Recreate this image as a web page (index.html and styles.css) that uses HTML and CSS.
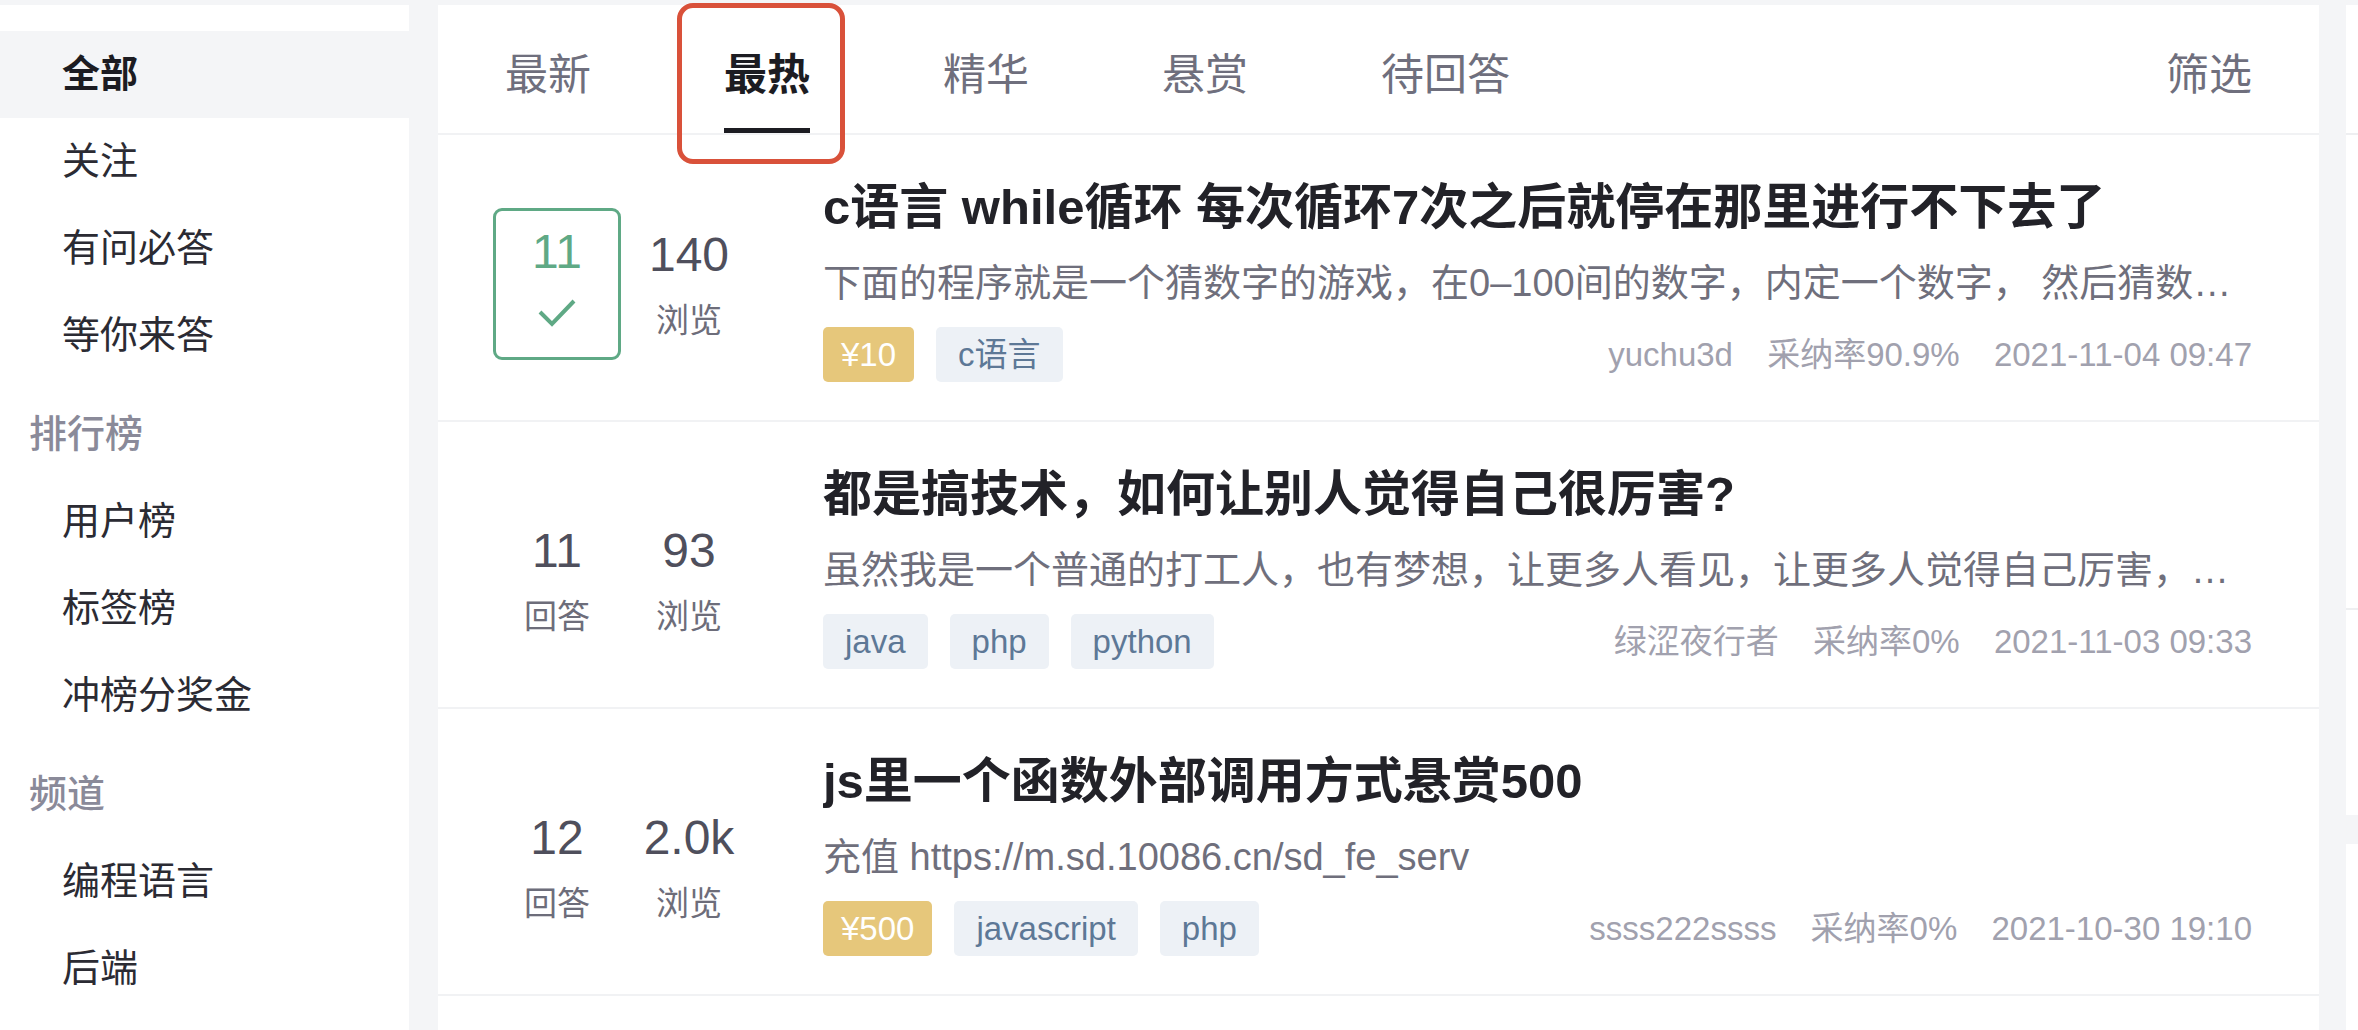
FILE: index.html
```html
<!DOCTYPE html>
<html lang="zh-CN">
<head>
    <meta charset="UTF-8">
    <meta name="viewport" content="width=device-width, initial-scale=1.0">
    <title>问答</title>
    <link rel="stylesheet" href="styles.css">
</head>
<body>
<div class="page">

    <!-- Left navigation -->
    <aside class="sidebar">
        <div class="nav-item active">全部</div>
        <div class="nav-item">关注</div>
        <div class="nav-item">有问必答</div>
        <div class="nav-item">等你来答</div>

        <div class="nav-title">排行榜</div>
        <div class="nav-item">用户榜</div>
        <div class="nav-item">标签榜</div>
        <div class="nav-item">冲榜分奖金</div>

        <div class="nav-title">频道</div>
        <div class="nav-item">编程语言</div>
        <div class="nav-item">后端</div>
    </aside>

    <!-- Question feed -->
    <main class="feed">
        <div class="tabs">
            <div class="tab">最新</div>
            <div class="tab active">最热<span class="highlight"></span></div>
            <div class="tab">精华</div>
            <div class="tab">悬赏</div>
            <div class="tab">待回答</div>
            <div class="tab filter">筛选</div>
        </div>

        <div class="question">
            <div class="stats solved">
                <div class="stat accepted">
                    <div class="stat-num">11</div>
                    <svg class="check" width="38" height="28" viewBox="0 0 38 28">
                        <path d="M2 13 L14 25 L36 2" fill="none" stroke="#5fa985" stroke-width="4"/>
                    </svg>
                </div>
                <div class="stat">
                    <div class="stat-num">140</div>
                    <div class="stat-label">浏览</div>
                </div>
            </div>
            <div class="body">
                <div class="title">c语言 while循环 每次循环7次之后就停在那里进行不下去了</div>
                <div class="desc">下面的程序就是一个猜数字的游戏，在0–100间的数字，内定一个数字， 然后猜数…</div>
                <div class="foot">
                    <div class="tags">
                        <span class="tag bounty">¥10</span>
                        <span class="tag">c语言</span>
                    </div>
                    <div class="meta">
                        <span>yuchu3d</span>
                        <span>采纳率90.9%</span>
                        <span>2021-11-04 09:47</span>
                    </div>
                </div>
            </div>
        </div>

        <div class="question">
            <div class="stats">
                <div class="stat">
                    <div class="stat-num">11</div>
                    <div class="stat-label">回答</div>
                </div>
                <div class="stat">
                    <div class="stat-num">93</div>
                    <div class="stat-label">浏览</div>
                </div>
            </div>
            <div class="body">
                <div class="title">都是搞技术，如何让别人觉得自己很厉害?</div>
                <div class="desc">虽然我是一个普通的打工人，也有梦想，让更多人看见，让更多人觉得自己厉害，…</div>
                <div class="foot">
                    <div class="tags">
                        <span class="tag">java</span>
                        <span class="tag">php</span>
                        <span class="tag">python</span>
                    </div>
                    <div class="meta">
                        <span>绿涩夜行者</span>
                        <span>采纳率0%</span>
                        <span>2021-11-03 09:33</span>
                    </div>
                </div>
            </div>
        </div>

        <div class="question">
            <div class="stats">
                <div class="stat">
                    <div class="stat-num">12</div>
                    <div class="stat-label">回答</div>
                </div>
                <div class="stat">
                    <div class="stat-num">2.0k</div>
                    <div class="stat-label">浏览</div>
                </div>
            </div>
            <div class="body">
                <div class="title">js里一个函数外部调用方式悬赏500</div>
                <div class="desc">充值 https://m.sd.10086.cn/sd_fe_serv</div>
                <div class="foot">
                    <div class="tags">
                        <span class="tag bounty">¥500</span>
                        <span class="tag">javascript</span>
                        <span class="tag">php</span>
                    </div>
                    <div class="meta">
                        <span>ssss222ssss</span>
                        <span>采纳率0%</span>
                        <span>2021-10-30 19:10</span>
                    </div>
                </div>
            </div>
        </div>
    </main>

    <!-- Right column (cut off by the window) -->
    <aside class="side-panel">
        <div class="side-card first">
            <div class="side-head"></div>
            <div class="side-block"></div>
        </div>
        <div class="side-card"></div>
    </aside>

</div>
</body>
</html>
```

FILE: styles.css
```css
body {
    margin: 0;
    background-color: #f4f5f7;
    font-family: "Liberation Sans", "Noto Sans CJK SC", sans-serif;
    overflow: hidden;
}
.page {
    display: flex;
    padding-top: 5px;
    height: 1025px;
}

/* Sidebar */
.sidebar {
    width: 409px;
    flex-shrink: 0;
    background-color: #fff;
    padding-top: 26px;
}
.nav-item {
    height: 87px;
    line-height: 87px;
    padding-left: 62px;
    font-size: 38px;
    color: #2b2b33;
}
.nav-item.active {
    background-color: #f4f5f7;
    color: #1c1c22;
    font-weight: 600;
}
.nav-title {
    margin-top: 12px;
    height: 87px;
    line-height: 87px;
    padding-left: 29px;
    font-size: 38px;
    font-weight: 500;
    color: #8a8a99;
}

/* Feed */
.feed {
    width: 1881px;
    flex-shrink: 0;
    margin-left: 29px;
    background-color: #fff;
}
.tabs {
    display: flex;
    gap: 133px;
    padding: 0 67px;
    border-bottom: 2px solid #f1f2f4;
}
.tab {
    position: relative;
    height: 128px;
    box-sizing: border-box;
    padding-top: 9px;
    border-bottom: 5px solid transparent;
    display: flex;
    align-items: center;
    font-size: 43px;
    color: #6f6f7d;
}
.tab.active {
    color: #1c1c22;
    font-weight: 600;
    border-bottom-color: #1c1c22;
}
.tab.filter {
    margin-left: auto;
}
.highlight {
    position: absolute;
    left: -47px;
    top: -2px;
    width: 168px;
    height: 161px;
    box-sizing: border-box;
    border: 5px solid #d9513a;
    border-radius: 16px;
}

.question {
    display: flex;
    align-items: flex-start;
    padding: 39px 67px 38px 55px;
    border-bottom: 2px solid #f1f2f4;
}
.stats {
    display: flex;
    align-items: center;
    gap: 4px;
    flex-shrink: 0;
    padding-top: 60px;
}
.stats.solved {
    padding-top: 34px;
}
.stat {
    width: 128px;
    display: flex;
    flex-direction: column;
    align-items: center;
}
.stat-num {
    font-size: 48px;
    line-height: 60px;
    color: #4f4f5c;
}
.stat-label {
    margin-top: 14px;
    font-size: 33px;
    line-height: 44px;
    color: #6d6d7a;
}
.stat.accepted {
    height: 152px;
    box-sizing: border-box;
    padding-top: 11px;
    border: 3px solid #5fa985;
    border-radius: 9px;
}
.stat.accepted .stat-num {
    color: #5fa985;
}
.check {
    margin-top: 17px;
}

.body {
    flex: 1;
    min-width: 0;
    margin-left: 70px;
}
.title {
    font-size: 49px;
    line-height: 66px;
    font-weight: 600;
    color: #222228;
    white-space: nowrap;
    overflow: hidden;
}
.desc {
    margin-top: 12px;
    font-size: 38px;
    line-height: 62px;
    color: #6f6f7c;
    white-space: nowrap;
    overflow: hidden;
    text-overflow: ellipsis;
}
.foot {
    margin-top: 13px;
    display: flex;
    align-items: center;
    justify-content: space-between;
}
.tags {
    display: flex;
    gap: 22px;
}
.tag {
    height: 55px;
    line-height: 55px;
    padding: 0 22px;
    border-radius: 5px;
    background-color: #edf1f6;
    color: #5d7896;
    font-size: 33px;
}
.tag.bounty {
    padding: 0 18px;
    background-color: #e6c77b;
    color: #fff;
}
.meta {
    line-height: 55px;
    font-size: 33px;
    color: #a1a1ae;
    white-space: nowrap;
}
.meta span + span {
    margin-left: 25px;
}

/* Right column */
.side-panel {
    width: 600px;
    flex-shrink: 0;
    margin-left: 27px;
}
.side-card {
    background-color: #fff;
    height: 400px;
}
.side-card.first {
    height: 810px;
    margin-bottom: 29px;
}
.side-head {
    height: 128px;
    border-bottom: 2px solid #eeeff1;
}
.side-block {
    height: 473px;
    border-bottom: 2px solid #eeeff1;
}
```
